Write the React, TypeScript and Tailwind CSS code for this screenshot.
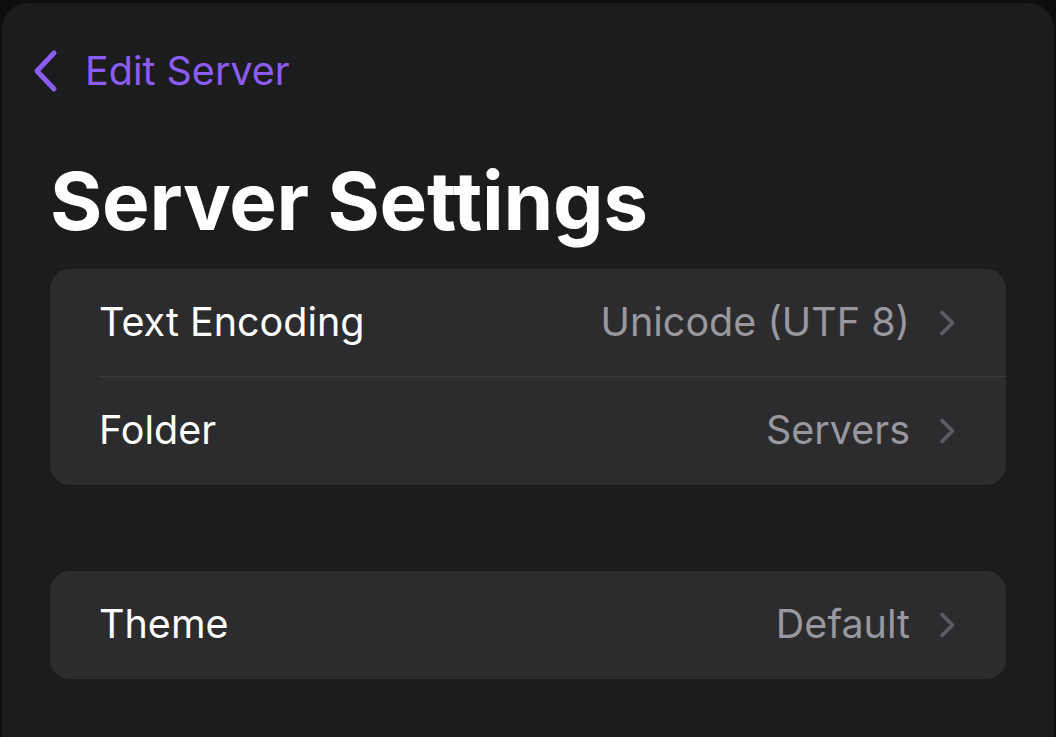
import { ReactNode } from "react"

function Chevron() {
  return (
    <svg width="20" height="28" viewBox="0 0 20 28" fill="none" className="shrink-0">
      <path d="M5 3.5 L15.5 14 L5 24.5" stroke="#5c5c61" strokeWidth="3.8" strokeLinecap="round" strokeLinejoin="round" />
    </svg>
  )
}

function Row({ label, value, divider }: { label: string; value: string; divider?: boolean }) {
  return (
    <div className="relative flex h-[108px] items-center pl-[49px] pr-[49px]">
      <span className="text-[39.5px] text-white">{label}</span>
      <span className="ml-auto mr-[27px] text-[39.5px] text-[#98989e]">{value}</span>
      <Chevron />
      {divider && <div className="absolute bottom-0 left-[49px] right-0 h-px bg-[#3a3a3d]" />}
    </div>
  )
}

function Card({ children }: { children: ReactNode }) {
  return <div className="overflow-hidden rounded-[20px] bg-[#2c2c2e]">{children}</div>
}

export default function App() {
  return (
    <div className="h-[737px] w-[1056px] overflow-hidden bg-[#0e0e0f] px-[2px] pt-[3px]" style={{ fontFamily: "Inter, 'Noto Sans', sans-serif" }}>
      <div className="h-full rounded-t-[26px] bg-[#1c1c1e]">
        <div className="flex items-center pl-[27px] pt-[44px]">
          <svg width="32" height="46" viewBox="0 0 32 46" fill="none">
            <path d="M25 5 L8 23 L25 41" stroke="#8c5cf6" strokeWidth="5" strokeLinecap="round" strokeLinejoin="round" />
          </svg>
          <span className="ml-[24px] text-[39.5px] leading-[48px] text-[#8c5cf6]">Edit Server</span>
        </div>
        <h1 className="mt-[58px] pl-[48px] text-[80px] font-bold leading-[96px] text-white tracking-[-0.3px]">Server Settings</h1>
        <div className="mx-[48px] mt-[20px]">
          <Card>
            <Row label="Text Encoding" value="Unicode (UTF 8)" divider />
            <Row label="Folder" value="Servers" />
          </Card>
          <div className="h-[86px]" />
          <Card>
            <Row label="Theme" value="Default" />
          </Card>
        </div>
      </div>
    </div>
  )
}
